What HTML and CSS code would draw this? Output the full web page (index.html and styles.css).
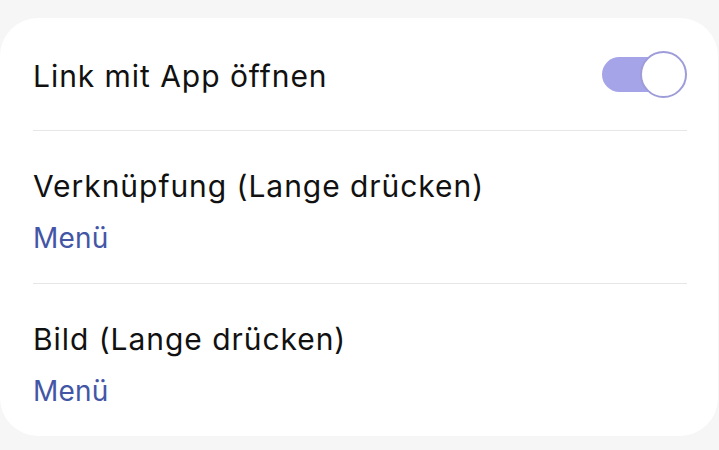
FILE: index.html
```html
<!DOCTYPE html>
<html lang="de">
<head>
  <meta charset="UTF-8">
  <meta name="viewport" content="width=device-width, initial-scale=1.0">
  <title>Links</title>
  <link rel="stylesheet" href="styles.css">
</head>
<body>
  <div class="card">
    <div class="row row-switch">
      <div class="title">Link mit App öffnen</div>
      <div class="switch on">
        <div class="track"></div>
        <div class="thumb"></div>
      </div>
    </div>

    <div class="row">
      <div class="title">Verknüpfung (Lange drücken)</div>
      <div class="value">Menü</div>
    </div>

    <div class="row">
      <div class="title">Bild (Lange drücken)</div>
      <div class="value">Menü</div>
    </div>
  </div>
</body>
</html>
```
FILE: styles.css
```css
* { box-sizing: border-box; }
body {
  margin: 0;
  height: 450px;
  overflow: hidden;
  background: #f6f6f6;
  font-family: Inter, 'Liberation Sans', sans-serif;
  color: #111;
}
.card {
  margin: 18px 1px 0 0;
  padding: 0 31px 0 33px;
  background: #fff;
  border-radius: 38px;
}
.row {
  padding: 37px 0 27px;
  border-bottom: 1px solid #e6e6e6;
}
.row:last-child { border-bottom: none; }
.row-switch {
  display: flex;
  align-items: center;
  justify-content: space-between;
  height: 113px;
  padding: 0;
}
.row-switch .title { margin-top: 4px; }
.title {
  font-size: 30px;
  line-height: 36px;
  letter-spacing: 0.95px;
  white-space: nowrap;
}
.value {
  margin-top: 16px;
  font-size: 28px;
  line-height: 36px;
  letter-spacing: 0.2px;
  color: #4356a6;
}
.switch {
  position: relative;
  width: 85px;
  height: 47px;
}
.switch .track {
  position: absolute;
  left: 0;
  top: 6px;
  width: 82px;
  height: 35px;
  border-radius: 18px;
  background: #a5a4e8;
}
.switch .thumb {
  position: absolute;
  right: 0;
  top: 0;
  width: 47px;
  height: 47px;
  border-radius: 50%;
  background: #fff;
  border: 2px solid #9e9cd9;
}
```
